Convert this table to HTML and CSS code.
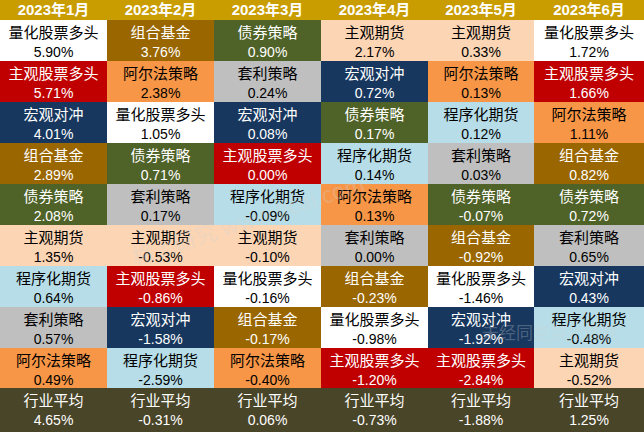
FILE: index.html
```html
<!DOCTYPE html>
<html lang="zh">
<head>
<meta charset="utf-8">
<link rel="stylesheet" href="styles.css">
</head>
<body>
<div class="board">
  <div class="grid">
    <div class="hd">2023年1月</div>
    <div class="hd">2023年2月</div>
    <div class="hd">2023年3月</div>
    <div class="hd">2023年4月</div>
    <div class="hd">2023年5月</div>
    <div class="hd">2023年6月</div>

    <div class="c quant"><span class="n">量化股票多头</span><span class="v">5.90%</span></div>
    <div class="c fof"><span class="n">组合基金</span><span class="v">3.76%</span></div>
    <div class="c bond"><span class="n">债券策略</span><span class="v">0.90%</span></div>
    <div class="c cta"><span class="n">主观期货</span><span class="v">2.17%</span></div>
    <div class="c cta"><span class="n">主观期货</span><span class="v">0.33%</span></div>
    <div class="c quant"><span class="n">量化股票多头</span><span class="v">1.72%</span></div>

    <div class="c stock"><span class="n">主观股票多头</span><span class="v">5.71%</span></div>
    <div class="c alpha"><span class="n">阿尔法策略</span><span class="v">2.38%</span></div>
    <div class="c arb"><span class="n">套利策略</span><span class="v">0.24%</span></div>
    <div class="c macro"><span class="n">宏观对冲</span><span class="v">0.72%</span></div>
    <div class="c alpha"><span class="n">阿尔法策略</span><span class="v">0.13%</span></div>
    <div class="c stock"><span class="n">主观股票多头</span><span class="v">1.66%</span></div>

    <div class="c macro"><span class="n">宏观对冲</span><span class="v">4.01%</span></div>
    <div class="c quant"><span class="n">量化股票多头</span><span class="v">1.05%</span></div>
    <div class="c macro"><span class="n">宏观对冲</span><span class="v">0.08%</span></div>
    <div class="c bond"><span class="n">债券策略</span><span class="v">0.17%</span></div>
    <div class="c prog"><span class="n">程序化期货</span><span class="v">0.12%</span></div>
    <div class="c alpha"><span class="n">阿尔法策略</span><span class="v">1.11%</span></div>

    <div class="c fof"><span class="n">组合基金</span><span class="v">2.89%</span></div>
    <div class="c bond"><span class="n">债券策略</span><span class="v">0.71%</span></div>
    <div class="c stock"><span class="n">主观股票多头</span><span class="v">0.00%</span></div>
    <div class="c prog"><span class="n">程序化期货</span><span class="v">0.14%</span></div>
    <div class="c arb"><span class="n">套利策略</span><span class="v">0.03%</span></div>
    <div class="c fof"><span class="n">组合基金</span><span class="v">0.82%</span></div>

    <div class="c bond"><span class="n">债券策略</span><span class="v">2.08%</span></div>
    <div class="c arb"><span class="n">套利策略</span><span class="v">0.17%</span></div>
    <div class="c prog"><span class="n">程序化期货</span><span class="v">-0.09%</span></div>
    <div class="c alpha"><span class="n">阿尔法策略</span><span class="v">0.13%</span></div>
    <div class="c bond"><span class="n">债券策略</span><span class="v">-0.07%</span></div>
    <div class="c bond"><span class="n">债券策略</span><span class="v">0.72%</span></div>

    <div class="c cta"><span class="n">主观期货</span><span class="v">1.35%</span></div>
    <div class="c cta"><span class="n">主观期货</span><span class="v">-0.53%</span></div>
    <div class="c cta"><span class="n">主观期货</span><span class="v">-0.10%</span></div>
    <div class="c arb"><span class="n">套利策略</span><span class="v">0.00%</span></div>
    <div class="c fof"><span class="n">组合基金</span><span class="v">-0.92%</span></div>
    <div class="c arb"><span class="n">套利策略</span><span class="v">0.65%</span></div>

    <div class="c prog"><span class="n">程序化期货</span><span class="v">0.64%</span></div>
    <div class="c stock"><span class="n">主观股票多头</span><span class="v">-0.86%</span></div>
    <div class="c quant"><span class="n">量化股票多头</span><span class="v">-0.16%</span></div>
    <div class="c fof"><span class="n">组合基金</span><span class="v">-0.23%</span></div>
    <div class="c quant"><span class="n">量化股票多头</span><span class="v">-1.46%</span></div>
    <div class="c macro"><span class="n">宏观对冲</span><span class="v">0.43%</span></div>

    <div class="c arb"><span class="n">套利策略</span><span class="v">0.57%</span></div>
    <div class="c macro"><span class="n">宏观对冲</span><span class="v">-1.58%</span></div>
    <div class="c fof"><span class="n">组合基金</span><span class="v">-0.17%</span></div>
    <div class="c quant"><span class="n">量化股票多头</span><span class="v">-0.98%</span></div>
    <div class="c macro"><span class="n">宏观对冲</span><span class="v">-1.92%</span></div>
    <div class="c prog"><span class="n">程序化期货</span><span class="v">-0.48%</span></div>

    <div class="c alpha"><span class="n">阿尔法策略</span><span class="v">0.49%</span></div>
    <div class="c prog"><span class="n">程序化期货</span><span class="v">-2.59%</span></div>
    <div class="c alpha"><span class="n">阿尔法策略</span><span class="v">-0.40%</span></div>
    <div class="c stock"><span class="n">主观股票多头</span><span class="v">-1.20%</span></div>
    <div class="c stock"><span class="n">主观股票多头</span><span class="v">-2.84%</span></div>
    <div class="c cta"><span class="n">主观期货</span><span class="v">-0.52%</span></div>

    <div class="c avg"><span class="n">行业平均</span><span class="v">4.65%</span></div>
    <div class="c avg"><span class="n">行业平均</span><span class="v">-0.31%</span></div>
    <div class="c avg"><span class="n">行业平均</span><span class="v">0.06%</span></div>
    <div class="c avg"><span class="n">行业平均</span><span class="v">-0.73%</span></div>
    <div class="c avg"><span class="n">行业平均</span><span class="v">-1.88%</span></div>
    <div class="c avg"><span class="n">行业平均</span><span class="v">1.25%</span></div>
  </div>
  <div class="wm wm-diag">格上研究 www.licai.com</div>
  <div class="wm wm-flat">未经同意禁止转载</div>
</div>
</body>
</html>
```

FILE: styles.css
```css
html, body {
  margin: 0;
  padding: 0;
  background: #ffffff;
}

.board {
  position: relative;
  width: 644px;
  height: 432px;
  overflow: hidden;
}

.grid {
  display: grid;
  grid-template-columns: 107px 107px 107px 107px 106px 110px;
  grid-template-rows: 20px repeat(8, 41px) 40px 44px;
  width: 644px;
  height: 432px;
}

.hd {
  background: #c99d00;
  color: #ffffff;
  font-family: "Liberation Sans", "Noto Sans CJK SC", sans-serif;
  font-weight: bold;
  font-size: 15px;
  line-height: 20px;
  text-align: center;
}

.c {
  display: flex;
  flex-direction: column;
  align-items: center;
  padding-top: 2px;
}

.n {
  font-family: "Noto Sans CJK SC", sans-serif;
  font-size: 15px;
  line-height: 20px;
}

.v {
  font-family: "Liberation Sans", sans-serif;
  font-size: 14px;
  line-height: 20px;
}

.quant { background: #ffffff; color: #000000; }
.fof   { background: #996600; color: #ffffff; }
.bond  { background: #4f6228; color: #ffffff; }
.cta   { background: #fcd5b4; color: #000000; }
.stock { background: #c00000; color: #ffffff; }
.alpha { background: #f79646; color: #000000; }
.arb   { background: #bfbfbf; color: #000000; }
.macro { background: #17375e; color: #ffffff; }
.prog  { background: #b7dee8; color: #000000; }
.avg   { background: #494529; color: #ffffff; }

.wm {
  position: absolute;
  font-family: "Noto Sans CJK SC", sans-serif;
  color: rgba(210, 210, 210, 0.3);
  white-space: nowrap;
  pointer-events: none;
}

.wm-diag {
  left: 132px;
  top: 240px;
  font-size: 22px;
  transform: rotate(-18deg);
  transform-origin: left center;
}

.wm-flat {
  left: 482px;
  top: 321px;
  font-size: 17px;
  line-height: 22px;
}
```
